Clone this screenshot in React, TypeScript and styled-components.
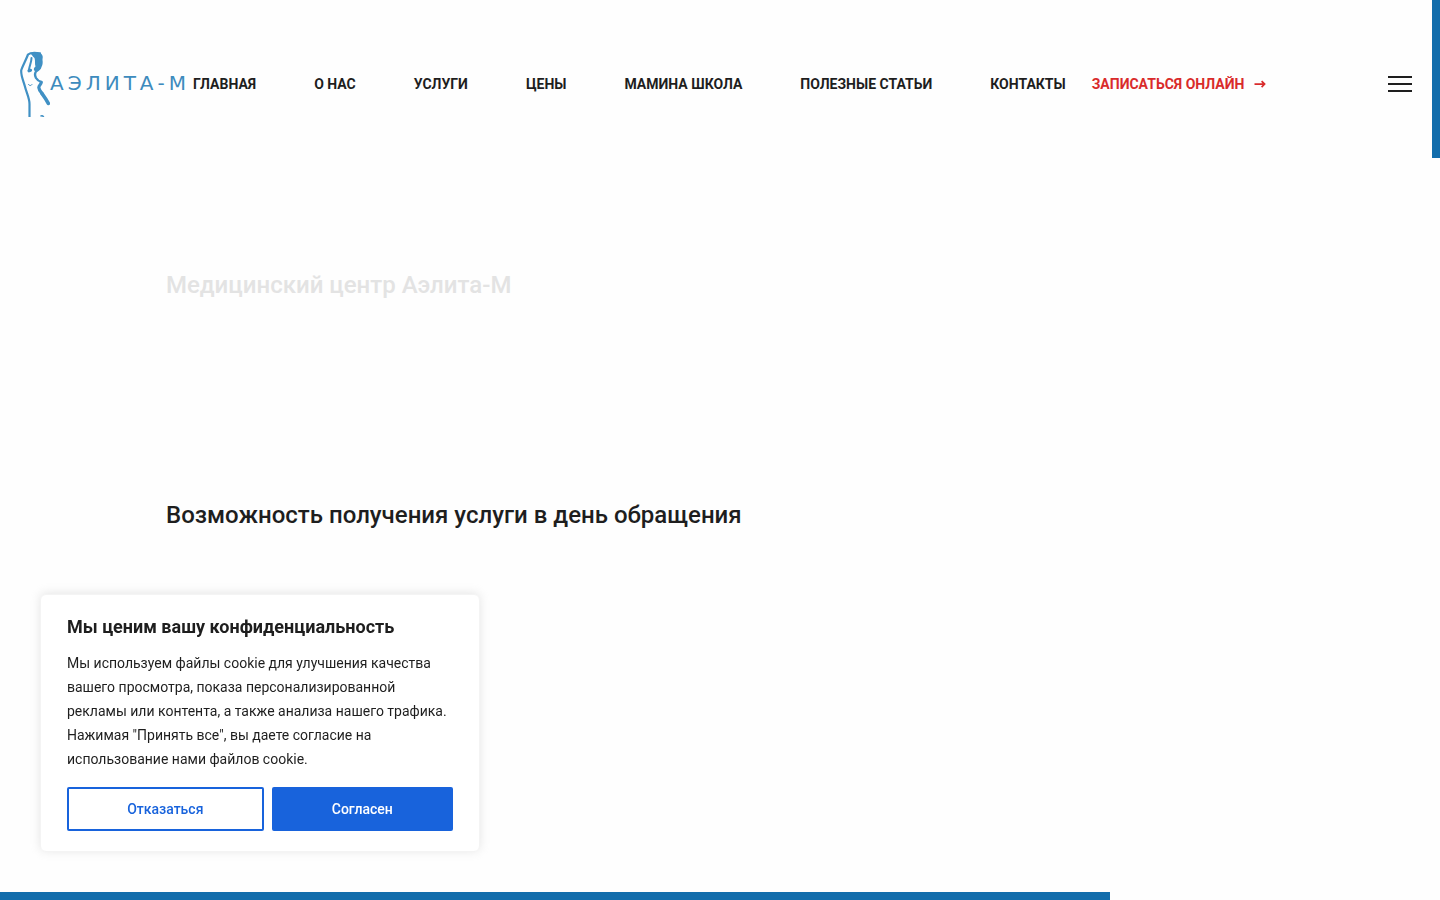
import React, { useState } from "react";
import styled, { createGlobalStyle } from "styled-components";

const GlobalStyle = createGlobalStyle`
  *, *::before, *::after { box-sizing: border-box; }
  body {
    margin: 0;
    background: #fefefe;
    color: #1e1e1e;
    font-family: Roboto, "Liberation Sans", sans-serif;
    font-size: 14px;
    line-height: 24px;
  }
  h1, h2, p, ul { margin: 0; padding: 0; }
`;

const Header = styled.header`
  display: flex;
  align-items: center;
  padding: 51px 28px 50px 20px;
`;

const Logo = styled.a`
  display: flex;
  align-items: center;
  flex: none;
  height: 66px;
  color: #3d8bbd;
  text-decoration: none;
`;

const LogoFigure = styled.svg`
  width: 30px;
  height: 66px;
`;

const LogoName = styled.span`
  padding-bottom: 2px;
  font-family: "DejaVu Sans", sans-serif;
  font-size: 20px;
  letter-spacing: 4px;
`;

const Nav = styled.nav`
  flex: none;
  margin-left: 3px;
`;

const Menu = styled.ul`
  display: flex;
  gap: 58px;
  list-style: none;
`;

const MenuLink = styled.a`
  color: #1e1e1e;
  font-weight: 700;
  text-decoration: none;
  white-space: nowrap;
`;

const BookingLink = styled(MenuLink)`
  display: flex;
  align-items: center;
  gap: 10px;
  margin-left: 26px;
  color: #d92b2b;
`;

const Arrow = styled.svg`
  width: 12px;
  height: 8px;
`;

const Burger = styled.button`
  display: flex;
  flex-direction: column;
  gap: 5px;
  width: 24px;
  margin-left: auto;
  padding: 0;
  border: 0;
  background: none;
  cursor: pointer;
`;

const BurgerLine = styled.span`
  height: 2px;
  width: 100%;
  background: #1e1e1e;
`;

const Main = styled.main`
  display: flex;
  flex-direction: column;
  gap: 200px;
  padding: 103px 166px 60px;
`;

const Slogan = styled.h2<{ $faded?: boolean }>`
  font-size: 24px;
  line-height: 30px;
  font-weight: 500;
  color: ${(p) => (p.$faded ? "#e3e3e3" : "#1e1e1e")};
`;

const RightBar = styled.div`
  position: fixed;
  top: 0;
  right: 0;
  width: 8px;
  height: 17.6vh;
  background: #126dac;
`;

const BottomBar = styled.div`
  position: fixed;
  bottom: 0;
  left: 0;
  width: 77.1vw;
  height: 8px;
  background: #126dac;
`;

const Consent = styled.section`
  position: fixed;
  left: 40px;
  bottom: 48px;
  width: 440px;
  max-width: calc(100vw - 80px);
  padding: 20px 26px;
  border: 1px solid #f4f4f4;
  border-radius: 6px;
  background: #fff;
  box-shadow: 0 -1px 10px 0 rgba(172, 171, 171, 0.3);
`;

const ConsentTitle = styled.h2`
  margin-bottom: 12px;
  font-size: 18px;
  line-height: 24px;
  font-weight: 700;
`;

const ConsentActions = styled.div`
  display: flex;
  gap: 8px;
  margin-top: 16px;
`;

const ConsentButton = styled.button<{ $primary?: boolean }>`
  flex: 1 1 auto;
  padding: 8px 20px;
  border: 2px solid #1863dc;
  border-radius: 2px;
  background: ${(p) => (p.$primary ? "#1863dc" : "transparent")};
  color: ${(p) => (p.$primary ? "#fff" : "#1863dc")};
  font: 500 14px/24px Roboto, "Liberation Sans", sans-serif;
  cursor: pointer;
`;

const menuItems = [
  "ГЛАВНАЯ",
  "О НАС",
  "УСЛУГИ",
  "ЦЕНЫ",
  "МАМИНА ШКОЛА",
  "ПОЛЕЗНЫЕ СТАТЬИ",
  "КОНТАКТЫ",
];

export default function App() {
  const [consentOpen, setConsentOpen] = useState(true);
  const closeConsent = () => setConsentOpen(false);

  return (
    <>
      <GlobalStyle />
      <Header>
        <Logo href="#">
          <LogoFigure
            viewBox="0 -1 30 66"
            fill="none"
            stroke="#4090c4"
            strokeLinecap="round"
            strokeLinejoin="round"
            aria-hidden="true"
          >
            <path
              d="M20 1.300C15 0.500 10 0.700 8 2.500C6 8 3 13 1.300 18C0.500 23 3.500 29 4.800 34C6.500 41 9.500 46 9.500 52L9.500 65"
              strokeWidth="2.200"
            />
            <path
              d="M11 2C13 0.500 19 0 21.500 2C23.500 4.500 22.500 6 22.500 8C23 11 22.500 13 21.500 15C21 17.500 19 19 16.500 20C13.500 19 13 16.500 15.500 14.500C14.500 12 15.500 9 14.500 6C13.500 5 12.500 4 11 2Z"
              fill="#4090c4"
              stroke="none"
            />
            <path d="M11.500 6C11.500 10 9.500 14 9 17.500" strokeWidth="2" />
            <path d="M9 18.800L10.500 18.300" strokeWidth="3.200" />
            <path
              d="M16.500 19C14.500 21 15 24 16 26C17.500 28.500 19.500 29.500 21.500 30"
              strokeWidth="2.400"
            />
            <path d="M21.200 30.500C21.200 32.500 18.800 33 18.800 35.500C19 38 21 40 22.500 42" strokeWidth="3.200" />
            <path d="M22 41.500C24.500 45 26.500 48 28.300 51.300" strokeWidth="3.600" />
            <path d="M8.500 32.500C9.500 34 11 34 12 32.500" strokeWidth="1" />
            <path d="M21 64C22 63.500 23 64 23.500 64.800" strokeWidth="1.500" />
          </LogoFigure>
          <LogoName>АЭЛИТА-М</LogoName>
        </Logo>
        <Nav>
          <Menu>
            {menuItems.map((item) => (
              <li key={item}>
                <MenuLink href="#">{item}</MenuLink>
              </li>
            ))}
          </Menu>
        </Nav>
        <BookingLink href="#">
          ЗАПИСАТЬСЯ ОНЛАЙН
          <Arrow viewBox="0 0 12 8" aria-hidden="true">
            <path
              d="M0.500 5H8.500L7 6.500L8.200 7.700L11.800 4L8.200 0.500L7 1.700L8.500 3.200H0.500Z"
              fill="#d92b2b"
            />
          </Arrow>
        </BookingLink>
        <Burger type="button" aria-label="Меню">
          <BurgerLine />
          <BurgerLine />
          <BurgerLine />
        </Burger>
      </Header>

      <Main>
        <Slogan $faded>Медицинский центр Аэлита-М</Slogan>
        <Slogan>Возможность получения услуги в день обращения</Slogan>
      </Main>

      <RightBar />
      <BottomBar />

      {consentOpen && (
        <Consent aria-labelledby="consent-title">
          <ConsentTitle id="consent-title">Мы ценим вашу конфиденциальность</ConsentTitle>
          <p>
            Мы используем файлы cookie для улучшения качества вашего просмотра, показа
            персонализированной рекламы или контента, а также анализа нашего трафика. Нажимая
            "Принять все", вы даете согласие на использование нами файлов cookie.
          </p>
          <ConsentActions>
            <ConsentButton type="button" onClick={closeConsent}>
              Отказаться
            </ConsentButton>
            <ConsentButton type="button" $primary onClick={closeConsent}>
              Согласен
            </ConsentButton>
          </ConsentActions>
        </Consent>
      )}
    </>
  );
}
